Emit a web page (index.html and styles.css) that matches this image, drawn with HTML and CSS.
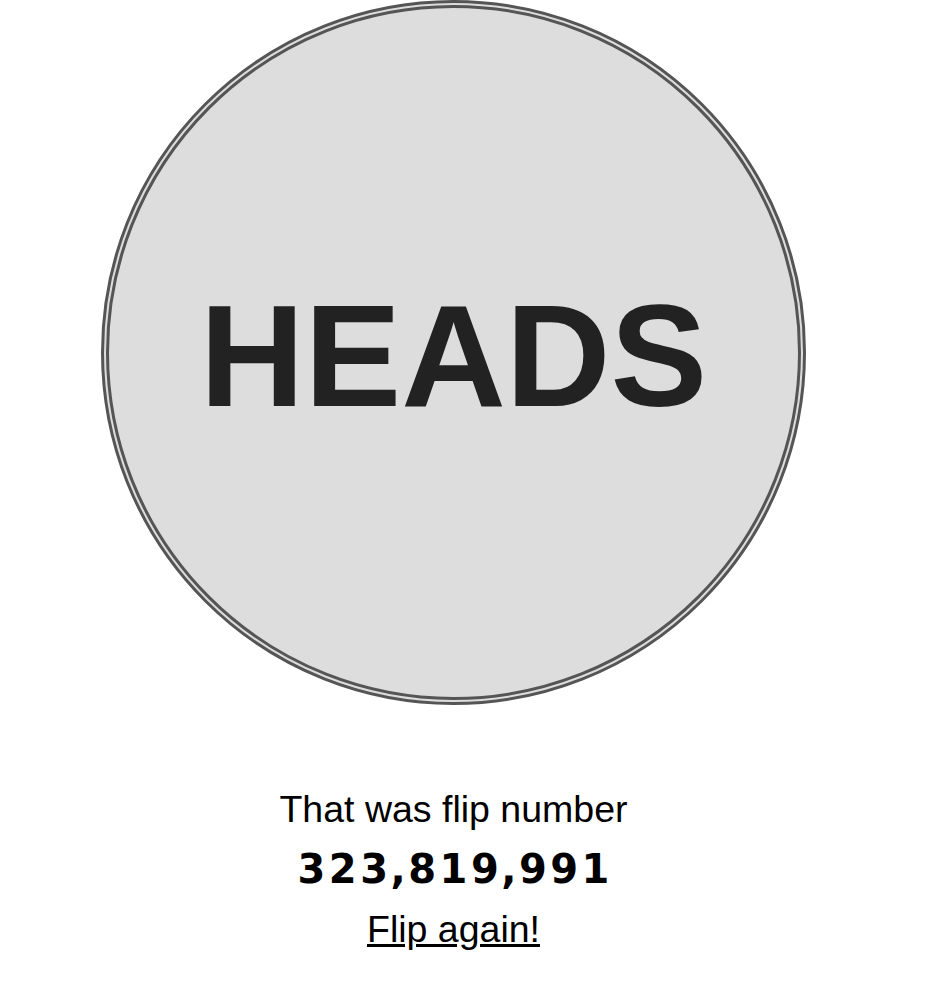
FILE: index.html
```html
<!DOCTYPE html>
<html lang="en">
<head>
<meta charset="utf-8">
<title>Coin flip</title>
<link rel="stylesheet" href="styles.css">
</head>
<body>
<main class="page">
  <div class="coin">
    <span class="coin-face">HEADS</span>
  </div>
  <div class="info">
    <div class="label">That was flip number</div>
    <div class="count">323<span class="sep">,</span>819<span class="sep">,</span>991</div>
    <div class="again"><a href="#" class="again-link">Flip again!</a></div>
  </div>
</main>
</body>
</html>
```

FILE: styles.css
```css
html, body {
  margin: 0;
  padding: 0;
  background: #ffffff;
}

.page {
  width: 907px;
  display: flex;
  flex-direction: column;
  align-items: center;
  font-family: "Liberation Sans", Arial, sans-serif;
  color: #000000;
}

.coin {
  box-sizing: border-box;
  width: 705px;
  height: 705px;
  border: 8px double #555555;
  border-radius: 50%;
  background: #dddddd;
  display: flex;
  align-items: center;
  justify-content: center;
  padding-top: 7px;
}

.coin-face {
  font-family: "Liberation Sans", Arial, sans-serif;
  font-weight: bold;
  font-size: 145px;
  line-height: 1;
  color: #222222;
}

.info {
  margin-top: 74px;
  display: flex;
  flex-direction: column;
  align-items: center;
}

.label {
  font-size: 37.5px;
  line-height: 60px;
}

.count {
  font-family: "DejaVu Sans", sans-serif;
  font-weight: bold;
  font-size: 40px;
  line-height: 60px;
  letter-spacing: 3.5px;
  padding-left: 3.5px;
}

.sep {
  margin: 0 -1px;
}

.again {
  font-size: 37.5px;
  line-height: 60px;
}

.again-link {
  color: #000000;
  text-decoration: underline;
}
```
